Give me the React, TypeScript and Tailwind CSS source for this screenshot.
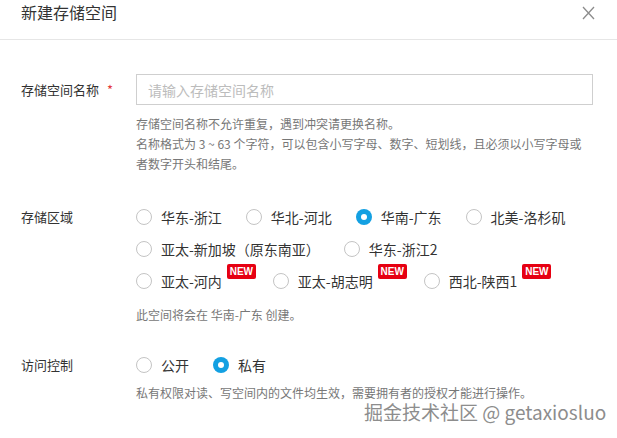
import React from "react";

type Opt = { label: string; isNew?: boolean };

const rows: Opt[][] = [
  [{ label: "华东-浙江" }, { label: "华北-河北" }, { label: "华南-广东" }, { label: "北美-洛杉矶" }],
  [{ label: "亚太-新加坡（原东南亚）" }, { label: "华东-浙江2" }],
  [
    { label: "亚太-河内", isNew: true },
    { label: "亚太-胡志明", isNew: true },
    { label: "西北-陕西1", isNew: true },
  ],
];

function Radio({ checked }: { checked?: boolean }) {
  if (checked) {
    return (
      <span className="w-4 h-4 rounded-full bg-[#13a0e2] flex items-center justify-center shrink-0">
        <span className="w-[6px] h-[6px] rounded-full bg-white" />
      </span>
    );
  }
  return <span className="w-4 h-4 rounded-full border border-[#c4c4c4] bg-white shrink-0" />;
}

function Option({ label, isNew, checked }: Opt & { checked?: boolean }) {
  return (
    <label className={`flex items-center h-[32px] ${isNew ? "mr-[17px]" : "mr-[24px]"}`}>
      <Radio checked={checked} />
      <span className="ml-[9px] text-[14px] text-[#333] whitespace-nowrap">{label}</span>
      {isNew && (
        <span className="relative -top-[10px] ml-[5px] w-[29px] h-[15px] bg-[#e60012] rounded-[2px] flex items-center justify-center text-white text-[10px] font-bold font-['Liberation_Sans',sans-serif]">
          NEW
        </span>
      )}
    </label>
  );
}

export default function App() {
  const selected = "华南-广东";

  return (
    <div className="relative w-[617px] h-[438px] bg-white overflow-hidden font-['Noto_Sans_CJK_SC',sans-serif]">
      {/* Header */}
      <div className="h-[40px] flex items-start justify-between pl-[21px] pr-[22px] pt-[3px] border-b border-[#e6e6e6]">
        <h1 className="text-[16px] leading-[18px] text-[#333]">新建存储空间</h1>
        <svg width="13" height="14" viewBox="0 0 13 14" className="mt-[3px]">
          <path d="M1 1l11 12M12 1L1 13" stroke="#8c8c8c" strokeWidth="1.3" fill="none" />
        </svg>
      </div>

      {/* Body */}
      <div className="pl-[21px] pt-[34px]">
        {/* Name */}
        <div className="flex">
          <div className="w-[115px] h-[31px] flex items-center text-[13px] text-[#333] shrink-0">
            存储空间名称<span className="ml-[8px] text-[#e4393c]">*</span>
          </div>
          <div>
            <input
              className="w-[457px] h-[31px] border border-[#cfcfcf] px-[11px] text-[14px] text-[#333] placeholder:text-[#bcbcbc] outline-none"
              placeholder="请输入存储空间名称"
            />
            <div className="mt-[9px] text-[12px] leading-[20px] text-[#777]">
              <p>存储空间名称不允许重复，遇到冲突请更换名称。</p>
              <p>
                名称格式为 3 ~ 63 个字符，可以包含小写字母、数字、短划线，且必须以小写字母或
                <br />
                者数字开头和结尾。
              </p>
            </div>
          </div>
        </div>

        {/* Region */}
        <div className="flex mt-[27px]">
          <div className="w-[115px] h-[32px] flex items-center text-[13px] text-[#333] shrink-0">存储区域</div>
          <div>
            {rows.map((r, i) => (
              <div key={i} className="flex">
                {r.map((o) => (
                  <Option key={o.label} {...o} checked={o.label === selected} />
                ))}
              </div>
            ))}
            <p className="mt-[8px] text-[12px] leading-[20px] text-[#777]">此空间将会在 华南-广东 创建。</p>
          </div>
        </div>

        {/* Access */}
        <div className="flex mt-[26px]">
          <div className="w-[115px] h-[28px] flex items-center text-[13px] text-[#333] shrink-0">访问控制</div>
          <div>
            <div className="flex">
              <label className="flex items-center h-[28px] mr-[24px]">
                <Radio />
                <span className="ml-[9px] text-[14px] text-[#333]">公开</span>
              </label>
              <label className="flex items-center h-[28px]">
                <Radio checked />
                <span className="ml-[9px] text-[14px] text-[#333]">私有</span>
              </label>
            </div>
            <p className="mt-[4px] text-[12px] leading-[20px] text-[#777]">
              私有权限对读、写空间内的文件均生效，需要拥有者的授权才能进行操作。
            </p>
          </div>
        </div>
      </div>

      {/* Watermark */}
      <div className="absolute left-[364px] top-[399px] text-[19px] leading-[26px] text-[#8d8d8d] whitespace-nowrap [text-shadow:0_0_2px_#fff,0_0_1px_#fff]">
        掘金技术社区 @ getaxiosluo
      </div>
    </div>
  );
}
